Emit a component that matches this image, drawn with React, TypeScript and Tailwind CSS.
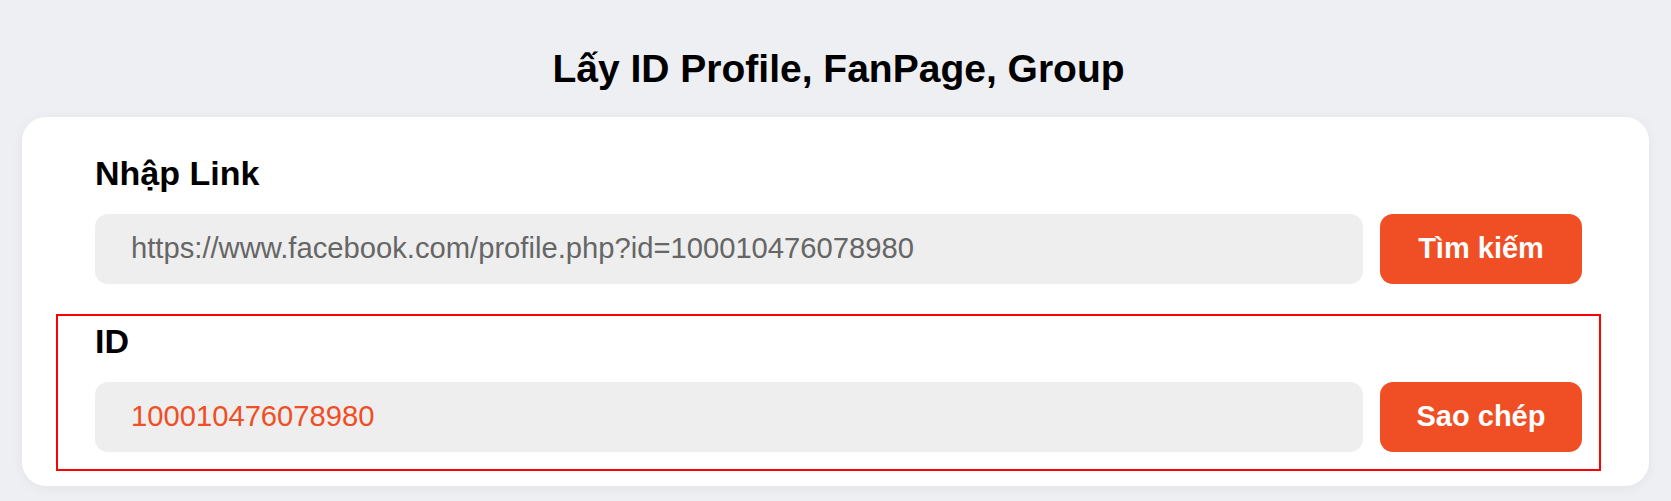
import React from "react";

export default function App() {
  return (
    <div
      className="min-h-[501px] w-full bg-[#eeeff3] px-[22px] pt-[49px] pb-[15px]"
      style={{ fontFamily: '"Liberation Sans", Arial, sans-serif' }}
    >
      <h1 className="mb-[29px] pl-[6px] text-center text-[39px] font-bold leading-none text-black">
        Lấy ID Profile, FanPage, Group
      </h1>
      <div className="rounded-[24px] bg-white pl-[73px] pr-[67px] pt-[39px] pb-[15px] shadow-[0_2px_12px_rgba(0,0,0,0.05)]">
        <div>
          <div className="mb-[24px] text-[34px] font-bold leading-none text-black">Nhập Link</div>
          <div className="flex gap-[17px]">
            <div className="flex h-[70px] flex-1 items-center rounded-[13px] bg-[#eeeeee] pl-[36px] text-[29.2px] text-[#666666]">
              https://www.facebook.com/profile.php?id=100010476078980
            </div>
            <button className="h-[70px] w-[202px] rounded-[13px] bg-[#f04e24] text-[29px] font-bold text-white">
              Tìm kiếm
            </button>
          </div>
        </div>
        <div className="-ml-[39px] -mr-[19px] mt-[30px] border-2 border-[#ff0000] pl-[37px] pr-[17px] pt-[8px] pb-[17px]">
          <div className="mb-[24px] text-[34px] font-bold leading-none text-black">ID</div>
          <div className="flex gap-[17px]">
            <div className="flex h-[70px] flex-1 items-center rounded-[13px] bg-[#eeeeee] pl-[36px] text-[29.2px] text-[#f04e24]">
              100010476078980
            </div>
            <button className="h-[70px] w-[202px] rounded-[13px] bg-[#f04e24] text-[29px] font-bold text-white">
              Sao chép
            </button>
          </div>
        </div>
      </div>
    </div>
  );
}
